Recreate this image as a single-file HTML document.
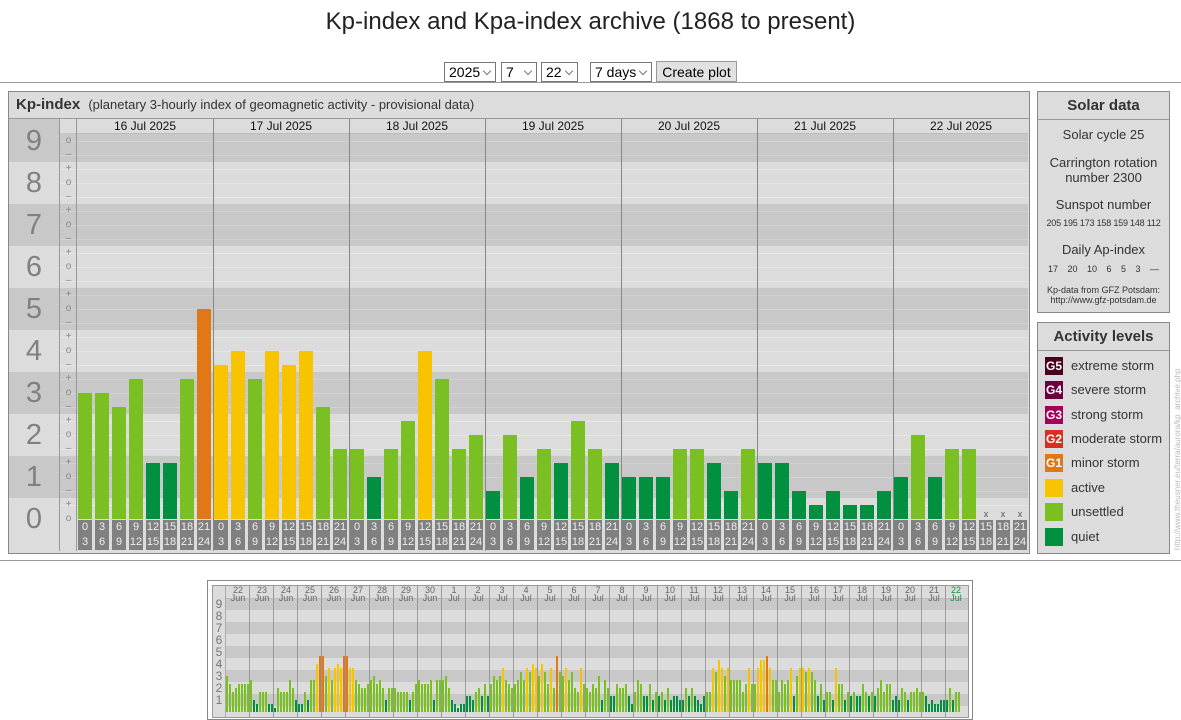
<!DOCTYPE html>
<html><head><meta charset="utf-8">
<style>
body{margin:0;width:1181px;height:718px;background:#fff;font-family:"Liberation Sans",sans-serif;position:relative;overflow:hidden}
.a{position:absolute}
h1{position:absolute;top:8px;left:0;width:1181px;text-align:center;font-weight:normal;font-size:24px;margin:0;color:#222}
.sel{position:absolute;top:62px;border:1px solid #767676;background:#fff;font-size:14px;line-height:18px;padding-left:4px;box-sizing:border-box;height:20px}
.sel:after{content:"";position:absolute;right:5px;top:5px;width:5px;height:5px;border-right:1px solid #777;border-bottom:1px solid #777;transform:rotate(45deg)}
.btn{position:absolute;top:61px;left:656px;width:81px;height:21px;border:1px solid #999;background:#e1e1e1;font-size:14px;line-height:20px;text-align:center;box-sizing:border-box}
.panel{position:absolute;background:#dcdcdc;border:1px solid #888;box-sizing:border-box}
.big{position:absolute;left:9px;width:50px;text-align:center;font-size:29px;color:#808080;line-height:30px;z-index:3}
.sg{position:absolute;left:60px;width:17px;text-align:center;font-size:10px;color:#888;line-height:10px;z-index:3}
.dl{position:absolute;top:119px;font-size:12px;color:#111;text-align:center;width:136px;line-height:14px;z-index:3}
.ax{position:absolute;top:520px;width:14px;height:30px;background:#808080;color:#eee;font-size:11px;line-height:15px;text-align:center;z-index:3}
.lg{position:absolute;left:1045px;width:18px;height:18px;color:#fff;font-size:12px;font-weight:bold;line-height:18px;text-align:center}
.lt{position:absolute;left:1071px;font-size:13px;color:#333;line-height:18px}
.sd{position:absolute;left:1038px;width:131px;text-align:center;color:#333}
.md{position:absolute;top:586px;width:24px;text-align:center;font-size:9px;color:#666;line-height:8px;z-index:3}
.ml{position:absolute;left:213px;width:12px;text-align:center;font-size:12px;color:#777;line-height:12px;z-index:3}
</style></head><body>
<h1>Kp-index and Kpa-index archive (1868 to present)</h1>
<div class="sel" style="left:444px;width:52px">2025</div>
<div class="sel" style="left:501px;width:36px">7</div>
<div class="sel" style="left:541px;width:37px">22</div>
<div class="sel" style="left:590px;width:62px">7 days</div>
<div class="btn">Create plot</div>
<div class="a" style="left:0;top:82px;width:1181px;height:1px;background:#999"></div>
<div class="a" style="left:0;top:560px;width:1181px;height:1px;background:#999"></div>

<div class="panel" style="left:8px;top:91px;width:1022px;height:463px"></div>
<div class="a" style="left:9px;top:92px;width:1020px;height:26px;border-bottom:1px solid #999;background:#dcdcdc"></div>
<div class="a" style="left:16px;top:96px;font-size:15px;font-weight:bold;color:#333">Kp-index <span style="font-weight:normal;font-size:13px;margin-left:4px">(planetary 3-hourly index of geomagnetic activity - provisional data)</span></div>
<div id="main"></div>
<div class="dl" style="left:77px">16 Jul 2025</div>
<div class="dl" style="left:213px">17 Jul 2025</div>
<div class="dl" style="left:349px">18 Jul 2025</div>
<div class="dl" style="left:485px">19 Jul 2025</div>
<div class="dl" style="left:621px">20 Jul 2025</div>
<div class="dl" style="left:757px">21 Jul 2025</div>
<div class="dl" style="left:893px">22 Jul 2025</div>
<div class="big" style="top:126px">9</div><div class="big" style="top:168px">8</div><div class="big" style="top:210px">7</div><div class="big" style="top:252px">6</div><div class="big" style="top:294px">5</div><div class="big" style="top:336px">4</div><div class="big" style="top:378px">3</div><div class="big" style="top:420px">2</div><div class="big" style="top:462px">1</div><div class="big" style="top:504px">0</div>
<div id="signs"></div>
<div id="axis">
<div class="ax" style="left:78px">0<br>3</div><div class="ax" style="left:95px">3<br>6</div><div class="ax" style="left:112px">6<br>9</div><div class="ax" style="left:129px">9<br>12</div><div class="ax" style="left:146px">12<br>15</div><div class="ax" style="left:163px">15<br>18</div><div class="ax" style="left:180px">18<br>21</div><div class="ax" style="left:197px">21<br>24</div>
<div class="ax" style="left:214px">0<br>3</div><div class="ax" style="left:231px">3<br>6</div><div class="ax" style="left:248px">6<br>9</div><div class="ax" style="left:265px">9<br>12</div><div class="ax" style="left:282px">12<br>15</div><div class="ax" style="left:299px">15<br>18</div><div class="ax" style="left:316px">18<br>21</div><div class="ax" style="left:333px">21<br>24</div>
<div class="ax" style="left:350px">0<br>3</div><div class="ax" style="left:367px">3<br>6</div><div class="ax" style="left:384px">6<br>9</div><div class="ax" style="left:401px">9<br>12</div><div class="ax" style="left:418px">12<br>15</div><div class="ax" style="left:435px">15<br>18</div><div class="ax" style="left:452px">18<br>21</div><div class="ax" style="left:469px">21<br>24</div>
<div class="ax" style="left:486px">0<br>3</div><div class="ax" style="left:503px">3<br>6</div><div class="ax" style="left:520px">6<br>9</div><div class="ax" style="left:537px">9<br>12</div><div class="ax" style="left:554px">12<br>15</div><div class="ax" style="left:571px">15<br>18</div><div class="ax" style="left:588px">18<br>21</div><div class="ax" style="left:605px">21<br>24</div>
<div class="ax" style="left:622px">0<br>3</div><div class="ax" style="left:639px">3<br>6</div><div class="ax" style="left:656px">6<br>9</div><div class="ax" style="left:673px">9<br>12</div><div class="ax" style="left:690px">12<br>15</div><div class="ax" style="left:707px">15<br>18</div><div class="ax" style="left:724px">18<br>21</div><div class="ax" style="left:741px">21<br>24</div>
<div class="ax" style="left:758px">0<br>3</div><div class="ax" style="left:775px">3<br>6</div><div class="ax" style="left:792px">6<br>9</div><div class="ax" style="left:809px">9<br>12</div><div class="ax" style="left:826px">12<br>15</div><div class="ax" style="left:843px">15<br>18</div><div class="ax" style="left:860px">18<br>21</div><div class="ax" style="left:877px">21<br>24</div>
<div class="ax" style="left:894px">0<br>3</div><div class="ax" style="left:911px">3<br>6</div><div class="ax" style="left:928px">6<br>9</div><div class="ax" style="left:945px">9<br>12</div><div class="ax" style="left:962px">12<br>15</div><div class="ax" style="left:979px">15<br>18</div><div class="ax" style="left:996px">18<br>21</div><div class="ax" style="left:1013px">21<br>24</div>
</div>
<div class="a" style="left:979px;top:509px;width:14px;text-align:center;font-size:9px;color:#555;z-index:3">x</div>
<div class="a" style="left:996px;top:509px;width:14px;text-align:center;font-size:9px;color:#555;z-index:3">x</div>
<div class="a" style="left:1013px;top:509px;width:14px;text-align:center;font-size:9px;color:#555;z-index:3">x</div>

<div class="panel" style="left:1037px;top:91px;width:133px;height:222px"></div>
<div class="a" style="left:1038px;top:92px;width:131px;height:27px;border-bottom:1px solid #999"></div>
<div class="sd" style="top:97px;font-size:15px;font-weight:bold">Solar data</div>
<div class="sd" style="top:127px;font-size:13px">Solar cycle 25</div>
<div class="sd" style="top:155px;font-size:13px;line-height:15px">Carrington rotation<br>number 2300</div>
<div class="sd" style="top:197px;font-size:13px">Sunspot number</div>
<div class="sd" style="top:218px;font-size:9px;letter-spacing:-.2px">205 195 173 158 159 148 112</div>
<div class="sd" style="top:242px;font-size:13px">Daily Ap-index</div>
<div class="sd" style="top:264px;font-size:9px;word-spacing:7px">17 20 10 6 5 3 —</div>
<div class="sd" style="top:285px;font-size:9px;line-height:10px">Kp-data from GFZ Potsdam:<br>http://www.gfz-potsdam.de</div>

<div class="panel" style="left:1037px;top:322px;width:133px;height:232px"></div>
<div class="a" style="left:1038px;top:323px;width:131px;height:27px;border-bottom:1px solid #999"></div>
<div class="sd" style="top:328px;font-size:15px;font-weight:bold">Activity levels</div>
<div class="lg" style="top:357px;background:#48001e">G5</div><div class="lt" style="top:357px">extreme storm</div>
<div class="lg" style="top:381px;background:#6a0040">G4</div><div class="lt" style="top:381px">severe storm</div>
<div class="lg" style="top:406px;background:#a3005a">G3</div><div class="lt" style="top:406px">strong storm</div>
<div class="lg" style="top:430px;background:#d83020">G2</div><div class="lt" style="top:430px">moderate storm</div>
<div class="lg" style="top:454px;background:#e07818">G1</div><div class="lt" style="top:454px">minor storm</div>
<div class="lg" style="top:479px;background:#f8c400"></div><div class="lt" style="top:479px">active</div>
<div class="lg" style="top:503px;background:#7ac023"></div><div class="lt" style="top:503px">unsettled</div>
<div class="lg" style="top:528px;background:#009040"></div><div class="lt" style="top:528px">quiet</div>
<div class="a" style="left:1173px;top:550px;transform:rotate(-90deg);transform-origin:0 0;font-size:8px;color:#bbb;white-space:nowrap;width:220px">http://www.theusner.eu/terra/aurora/kp_archive.php</div>

<div class="a" style="left:207px;top:580px;width:766px;height:140px;border:1px solid #888;box-sizing:border-box"></div>
<div class="a" style="left:212px;top:585px;width:757px;height:133px;background:#dcdcdc;border:1px solid #999;box-sizing:border-box"></div>
<div id="mini"></div>
<div class="md" style="left:226px">22<br>Jun</div><div class="md" style="left:250px">23<br>Jun</div><div class="md" style="left:274px">24<br>Jun</div><div class="md" style="left:298px">25<br>Jun</div><div class="md" style="left:322px">26<br>Jun</div><div class="md" style="left:346px">27<br>Jun</div><div class="md" style="left:370px">28<br>Jun</div><div class="md" style="left:394px">29<br>Jun</div><div class="md" style="left:418px">30<br>Jun</div><div class="md" style="left:442px">1<br>Jul</div><div class="md" style="left:466px">2<br>Jul</div><div class="md" style="left:490px">3<br>Jul</div><div class="md" style="left:514px">4<br>Jul</div><div class="md" style="left:538px">5<br>Jul</div><div class="md" style="left:562px">6<br>Jul</div><div class="md" style="left:586px">7<br>Jul</div><div class="md" style="left:610px">8<br>Jul</div><div class="md" style="left:634px">9<br>Jul</div><div class="md" style="left:658px">10<br>Jul</div><div class="md" style="left:682px">11<br>Jul</div><div class="md" style="left:706px">12<br>Jul</div><div class="md" style="left:730px">13<br>Jul</div><div class="md" style="left:754px">14<br>Jul</div><div class="md" style="left:778px">15<br>Jul</div><div class="md" style="left:802px">16<br>Jul</div><div class="md" style="left:826px">17<br>Jul</div><div class="md" style="left:850px">18<br>Jul</div><div class="md" style="left:874px">19<br>Jul</div><div class="md" style="left:898px">20<br>Jul</div><div class="md" style="left:922px">21<br>Jul</div><div class="md" style="left:944px;color:#109040">22<br>Jul</div>
<div class="ml" style="top:598px">9</div><div class="ml" style="top:610px">8</div><div class="ml" style="top:622px">7</div><div class="ml" style="top:634px">6</div><div class="ml" style="top:646px">5</div><div class="ml" style="top:658px">4</div><div class="ml" style="top:670px">3</div><div class="ml" style="top:682px">2</div><div class="ml" style="top:694px">1</div>

<script>
(function(){
function col(k){return k>=4.5?'#e07818':k>=3.5?'#f8c400':k>=1.5?'#7ac023':'#009040'}
function d(p,x,y,w,h,c,z){var e=document.createElement('div');e.className='a';e.style.cssText='left:'+x+'px;top:'+y+'px;width:'+w+'px;height:'+h+'px;background:'+c+(z?';z-index:'+z:'');p.appendChild(e)}
var M=document.getElementById('main');
for(var n=0;n<=9;n++){var tp=519-42*(n+0.5),bt=519-42*(n-0.5);if(tp<133)tp=133;if(bt>519)bt=519;var c=n%2?'#c8c8c8':'#dcdcdc';var lt=(n==9?119:tp);d(M,9,lt,50,(n==0?551:bt)-lt,c);d(M,60,tp,968,bt-tp,c);}
for(var i=1;i<=28;i++){var y=Math.round(519-i*14);if(y>133){var kp=i/3;var band=Math.round(kp);d(M,60,y,968,1,band%2?'#d2d2d2':'#e6e6e6');}}
d(M,59,119,1,432,'#999');d(M,76,119,1,432,'#999');d(M,77,133,951,1,'#bbb');
var S=document.getElementById('signs');
for(var i=0;i<=27;i++){var r=i%3;var s=r==0?'o':r==1?'+':'–';var e=document.createElement('div');e.className='sg';e.style.top=(519-i*14-5)+'px';e.textContent=s;S.appendChild(e)}
for(var k=1;k<7;k++)d(M,77+136*k,119,1,432,'#888',2);
var v=[3,3,2.67,3.33,1.33,1.33,3.33,5, 3.67,4,3.33,4,3.67,4,2.67,1.67, 1.67,1,1.67,2.33,4,3.33,1.67,2, 0.67,2,1,1.67,1.33,2.33,1.67,1.33, 1,1,1,1.67,1.67,1.33,0.67,1.67, 1.33,1.33,0.67,0.33,0.67,0.33,0.33,0.67, 1,2,1,1.67,1.67];
for(var i=0;i<v.length;i++){var day=Math.floor(i/8),s=i%8;var x=78+136*day+17*s;var h=Math.round(v[i]*42);d(M,x,519-h,14,h,col(v[i]),2)}
var N=document.getElementById('mini');
for(var n=1;n<=9;n++){var t=712-12*n-6;d(N,226,t,742,12,n%2?'#c8c8c8':'#dcdcdc')}
d(N,226,712,742,5,'#dcdcdc');d(N,225,586,1,131,'#aaa');d(N,226,598,742,1,'#bbb');
for(var k=1;k<31;k++)d(N,226+24*k-1,586,1,131,'#999',2);
var mv=[3,2.3,1.7,2,2.3,2.3,2.3,2.3, 2.7,1,0.7,1.7,1.7,1.7,0.7,0.7, 0.3,2,1.7,1.7,1.7,2.7,2,1, 0.7,0.7,1.7,1,2.7,2.7,4,4.7, 4.7,3,3.7,2.7,3.7,4,3.7,4.7, 4.7,3.7,3.7,2.7,2.3,2,2,2.3, 2.7,3,2.3,2.7,2,1,2,2, 2,1.7,1.7,1.7,1.7,1,1.7,2.3, 2.7,2.3,2.3,2.3,2.7,1,2.7,2.7, 2.7,3,2,1,0.7,0.3,0.7,0.7, 1.3,1.3,1,1.7,2,1.3,2.3,1.3, 2.3,3,2.7,3,3.7,2.7,2.3,2, 2.3,2.7,3.3,2.7,3.7,3.3,4,3.7, 3,4,3.3,2.3,3.7,2,4.7,3.3, 3,3.7,2.7,3.3,2,1.7,3.7,2.3, 2,1.7,2.3,2,3,1,2.7,2, 1.3,1.3,2.3,2,2,2.3,1.3,0.7, 1.7,2.7,2.3,1.3,1.3,2.3,1,1.7, 1.3,1.7,1,2,1,1.3,1.3,1, 1,2,1.3,2,1.3,1,0.7,1.3, 1.7,1.7,3.7,3.3,4.3,3.7,3,3.7, 2.7,2.7,2.7,2.7,1.7,2.3,3.7,2.3, 2.3,3.7,4.3,4.3,4.7,3.7,2.7,2.7, 1.7,2.7,2.3,2.7,3.7,1.3,3,3.7, 3.7,3.3,3.7,3.3,2.7,1.3,2.3,1, 1.7,1.7,1,3.7,2.3,2.3,1,1.7, 1.3,1.7,1.3,1.3,2.3,1.7,1.3,1.7, 1.3,2,2.7,1.7,2.3,2.3,1,1.3, 1,2,1.7,1,1.7,1.7,2,1.7, 1.7,1.3,0.7,1,0.7,0.7,1,1, 1,2,1,1.7,1.7];
for(var i=0;i<mv.length;i++){var day=Math.floor(i/8),s=i%8;var x=226+24*day+3*s;var h=Math.round(mv[i]*12);d(N,x,712-h,2,h,col(mv[i]),2)}
})();
</script>
</body></html>
